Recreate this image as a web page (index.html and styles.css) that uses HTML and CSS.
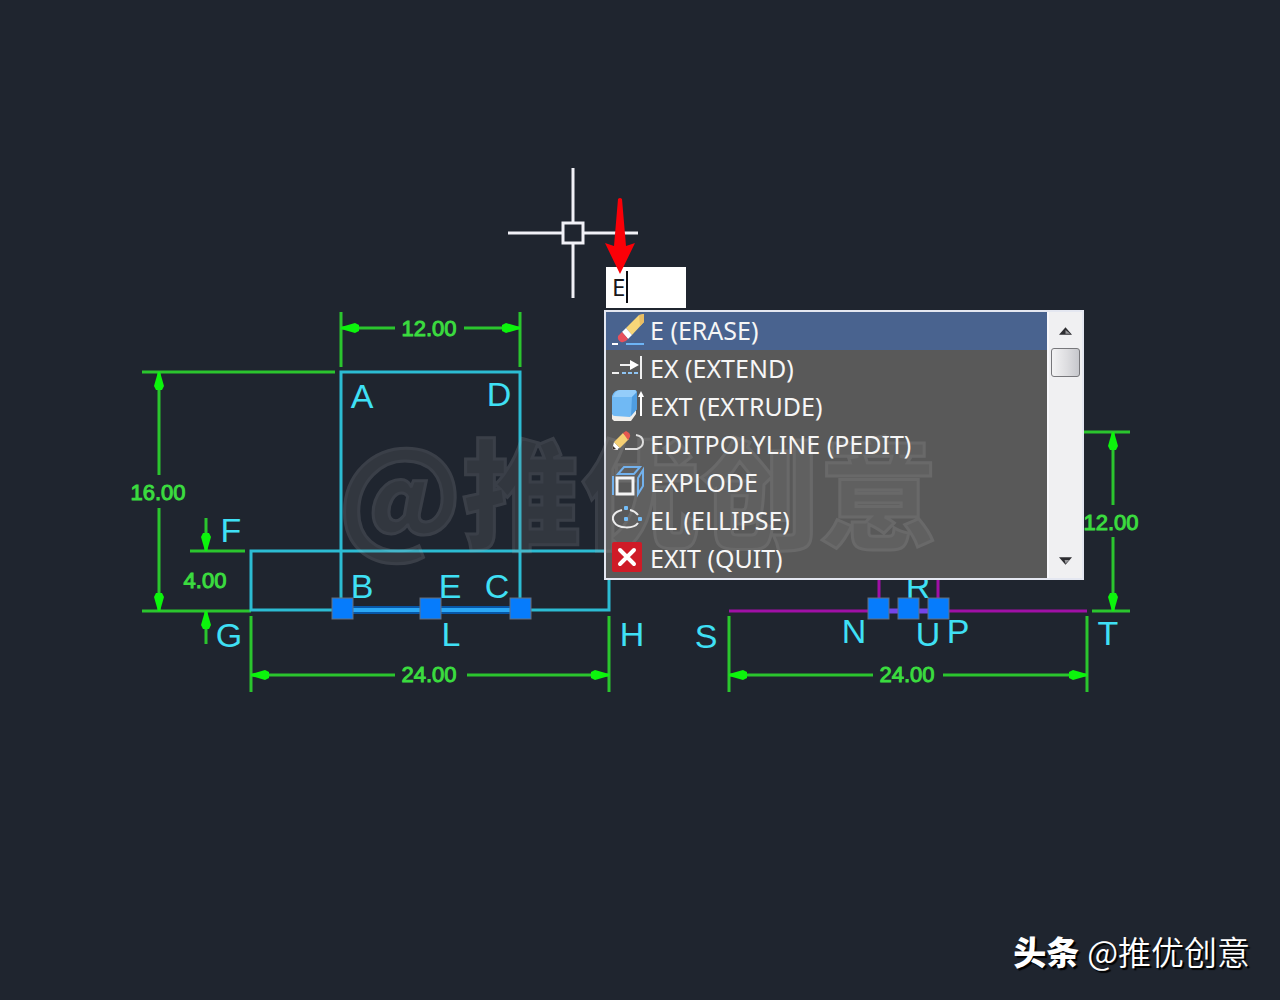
FILE: index.html
```html
<!DOCTYPE html>
<html lang="zh-CN">
<head>
<meta charset="utf-8">
<title>推优创意</title>
<link rel="stylesheet" href="styles.css">
</head>
<body>
<main class="workspace">
  <svg class="drawing" role="img" aria-label="Drawing">
    <defs>
      <path id="head" d="M-1 0 L-5 14 L-3 18 H3 L5 14 L1 0 Z"/>
      <rect id="grip" x="-10" y="-10" width="21" height="21"/>
    </defs>

    <g class="dim-line">
      <path d="M341 312V367M520 312V367M341 328H395M464 328H520"/>
      <path d="M142 372H335M142 611H251M159 372V475M159 508V611"/>
      <path d="M190 551H245M206 518V551M206 611V644"/>
      <path d="M251 616V692M609 616V692M251 675H395M467 675H609"/>
      <path d="M729 616V692M1087 616V692M729 675H873M943 675H1087"/>
      <path d="M1084 432H1130M1092 611H1130M1113 432V505M1113 537V611"/>
    </g>
    <g class="dim-head">
      <use href="#head" transform="translate(341 328) rotate(-90)"/>
      <use href="#head" transform="translate(520 328) rotate(90)"/>
      <use href="#head" transform="translate(159 372)"/>
      <use href="#head" transform="translate(159 611) rotate(180)"/>
      <use href="#head" transform="translate(206 551) rotate(180)"/>
      <use href="#head" transform="translate(206 611)"/>
      <use href="#head" transform="translate(251 675) rotate(-90)"/>
      <use href="#head" transform="translate(609 675) rotate(90)"/>
      <use href="#head" transform="translate(729 675) rotate(-90)"/>
      <use href="#head" transform="translate(1087 675) rotate(90)"/>
      <use href="#head" transform="translate(1113 432)"/>
      <use href="#head" transform="translate(1113 611) rotate(180)"/>
    </g>
    <g class="dim-text">
      <text x="429" y="336">12.00</text>
      <text x="158" y="500">16.00</text>
      <text x="205" y="588">4.00</text>
      <text x="429" y="682">24.00</text>
      <text x="907" y="682">24.00</text>
      <text x="1111" y="530">12.00</text>
    </g>

    <g class="outline">
      <path d="M341 610V372H520V610"/>
      <path d="M251 551H609V610H251Z"/>
    </g>
    <path class="selected-glow" d="M342 610H520"/>
    <path class="selected" d="M342 610H520"/>
    <path class="side" d="M729 611H1087M879 560V611M938 560V611"/>
    <path class="side-selected" d="M879 611H938"/>

    <g class="point">
      <text x="362" y="408">A</text>
      <text x="499" y="406">D</text>
      <text x="231" y="542">F</text>
      <text x="362" y="598">B</text>
      <text x="450" y="598">E</text>
      <text x="497" y="598">C</text>
      <text x="229" y="647">G</text>
      <text x="451" y="646">L</text>
      <text x="632" y="646">H</text>
      <text x="706" y="648">S</text>
      <text x="854" y="643">N</text>
      <text x="918" y="598">R</text>
      <text x="928" y="646">U</text>
      <text x="958" y="643">P</text>
      <text x="1108" y="645">T</text>
    </g>

    <g class="grips">
      <use href="#grip" x="342" y="608"/>
      <use href="#grip" x="430" y="608"/>
      <use href="#grip" x="520" y="608"/>
      <use href="#grip" x="878" y="608"/>
      <use href="#grip" x="908" y="608"/>
      <use href="#grip" x="938" y="608"/>
    </g>

    <path class="cursor" d="M508 233H562M584 233H638M573 168V222M573 244V298M563 223H583V243H563Z"/>
  </svg>

  <section class="prompt">
    <div class="entry">
      <input class="entry-box" type="text" value="E" aria-label="Command">
      <span class="caret"></span>
    </div>
    <div class="menu">
      <div class="options">
        <button class="option option-active" type="button">
          <svg class="icon" viewBox="0 0 32 32"><path d="M0 30H6" stroke="#fff" stroke-width="2"/><path d="M14 30H32" stroke="#6db4f5" stroke-width="2"/><path d="M14 14L27 1L32 0V8L20 21Z" fill="#f7d679"/><path d="M27 1L32 0V8L28 12Z" fill="#e9bd63"/><path d="M10 18L14 14L20 21L16 25Z" fill="#fff"/><path d="M10 18L16 25Q13 29 9 28Q5 26 6 22Z" fill="#e8505c"/></svg>
          <span class="label">E (ERASE)</span></button>
        <button class="option" type="button">
          <svg class="icon" viewBox="0 0 32 32"><path d="M8 13H21M0 21H7M29 4V27" stroke="#f0f0f0" stroke-width="2"/><path d="M18 8L27 13L18 18Z" fill="#fff"/><path d="M10 21H28" stroke="#8fc4f2" stroke-width="2" stroke-dasharray="4 2"/></svg>
          <span class="label">EX (EXTEND)</span></button>
        <button class="option" type="button">
          <svg class="icon" viewBox="0 0 32 32"><path d="M0 24L18 26L24 19V24L19 31H2L0 29Z" fill="#f0eeea"/><path d="M0 6Q2 0 8 0H22Q25 0 25 3V19L18 27L3 26Q0 26 0 23Z" fill="#70b9f4"/><path d="M3 3Q5 0 8 0H22Q25 0 24 3L20 7H1Z" fill="#94cdfa"/><path d="M20 7L25 2V19L19 26Z" fill="#4f9de0"/><path d="M29 6V26" stroke="#fff" stroke-width="2"/><path d="M26 7L29 1L32 7Z" fill="#fff"/></svg>
          <span class="label">EXT (EXTRUDE)</span></button>
        <button class="option" type="button">
          <svg class="icon" viewBox="0 0 32 32"><path d="M13 21H25Q31 19 31 14Q31 8 24 7M0 21H6" stroke="#dedede" stroke-width="2" fill="none"/><path d="M0 22L2 14L8 20Z" fill="#fff"/><path d="M2 14L11 5L17 11L8 20Z" fill="#f5cf73"/><path d="M11 5L14 3Q19 5 18 9L16 12Z" fill="#e65750"/><path d="M0 22L1 18L4 21Z" fill="#392e2c"/></svg>
          <span class="label">EDITPOLYLINE (PEDIT)</span></button>
        <button class="option" type="button">
          <svg class="icon" viewBox="0 0 32 32" fill="none"><path d="M6 8L12 1H28L22 8ZM26 12L31 4V20L26 28ZM1 10V29" stroke="#72b1ed" stroke-width="2"/><rect x="5" y="12" width="16" height="16" stroke="#f4f4f4" stroke-width="3"/></svg>
          <span class="label">EXPLODE</span></button>
        <button class="option" type="button">
          <svg class="icon" viewBox="0 0 32 32" fill="none"><path d="M10 6C2 8 -1 13 2 18C6 25 22 25 26 19M18 6Q23 7 26 11" stroke="#ececec" stroke-width="2"/><path d="M14 2V6M12 4H16M14 13V17M12 15H16M28 13V17M26 15H30" stroke="#74bdf8" stroke-width="3"/></svg>
          <span class="label">EL (ELLIPSE)</span></button>
        <button class="option" type="button">
          <svg class="icon" viewBox="0 0 32 32"><rect x="0" y="0" width="30" height="30" rx="2" fill="#cf1b27"/><path d="M8 8L22 22M22 8L8 22" stroke="#fff" stroke-width="4" stroke-linecap="round"/></svg>
          <span class="label">EXIT (QUIT)</span></button>
      </div>
      <div class="scrollbar">
        <button class="scroll-step" type="button" aria-label="Scroll up"><svg class="step-icon" viewBox="0 0 14 8"><path d="M0 8L7 0L14 8Z" fill="#2d2d31"/><path d="M7 7V3L12 7Z" fill="#99999c"/></svg></button>
        <div class="thumb"></div>
        <button class="scroll-step scroll-down" type="button" aria-label="Scroll down"><svg class="step-icon" viewBox="0 0 14 8"><path d="M0 0H14L7 8Z" fill="#2d2d31"/><path d="M6 3H11L7 7Z" fill="#99999c"/></svg></button>
      </div>
    </div>
    <svg class="pointer" viewBox="0 0 30 78"><path d="M13 2Q15 0 17 2L21 49L30 46L15 77L0 46L9 49Z" fill="#fb0007"/></svg>
  </section>

  <div class="watermark">@推优创意</div>
  <footer class="credit"><strong class="brand">头条</strong><span>@推优创意</span></footer>
</main>
</body>
</html>
```
FILE: styles.css
```css
* { box-sizing: border-box; }

body {
  margin: 0;
  background: #1f252f;
  font-family: "Noto Sans", "Noto Sans CJK SC", sans-serif;
}

.workspace {
  position: relative;
  min-height: 100vh;
  overflow: hidden;
}

/* Drawing canvas */
.drawing {
  display: block;
  width: 100%;
  height: 100vh;
  min-height: 720px;
  fill: none;
}

.dim-line { stroke: #2bc52e; stroke-width: 3; }
.dim-head { fill: #0cf40c; }
.dim-text {
  fill: #3bdc3f;
  stroke: #3bdc3f;
  stroke-width: 1;
  font: 22px "Liberation Sans", sans-serif;
  text-anchor: middle;
}
.outline { stroke: #2cbcd3; stroke-width: 3; }
.selected-glow { stroke: #0757a8; stroke-width: 8; }
.selected { stroke: #2ba8f6; stroke-width: 4; }
.side { stroke: #a010a6; stroke-width: 3; }
.side-selected { stroke: #7445e8; stroke-width: 5; }
.point {
  fill: #3fe0f5;
  font: 34px "Liberation Sans", sans-serif;
  text-anchor: middle;
}
.grips { fill: #067cfc; stroke: #66717f; stroke-width: 1; }
.cursor { stroke: #f1f1f7; stroke-width: 3; }

/* Command prompt floating at the cursor */
.prompt {
  position: absolute;
  left: 604px;
  top: 267px;
  width: 480px;
}

.entry {
  position: relative;
  width: 82px;
  height: 43px;
  padding: 0 0 2px 2px;
}
.entry-box {
  display: block;
  width: 100%;
  height: 41px;
  padding: 0 6px 2px;
  border: 0;
  background: #fff;
  color: #18181c;
  font: 24px "Noto Sans", sans-serif;
}
.caret {
  position: absolute;
  left: 22px;
  top: 4px;
  width: 2px;
  height: 32px;
  background: #0c0d12;
}

.menu {
  display: flex;
  border: 2px solid #e4e7f1;
  background: #595959;
}
.options { flex: 1; }
.option {
  display: flex;
  align-items: center;
  gap: 6px;
  width: 100%;
  height: 38px;
  padding: 0 6px 2px;
  border: 0;
  background: #595959;
  color: #f6f6f6;
  font: 25px "Noto Sans", sans-serif;
  white-space: nowrap;
}
.option-active { background: #49638f; }
.icon { width: 32px; height: 32px; }

/* Icons and labels stay above the watermark, their rows below it */
.icon,
.label {
  position: relative;
  z-index: 2;
}

.scrollbar {
  display: flex;
  flex-direction: column;
  align-items: center;
  width: 35px;
  border-left: 2px solid #f8f8fc;
  background: #f0f0f2;
}
.scroll-step {
  width: 100%;
  height: 36px;
  padding: 0;
  border: 0;
  background: none;
}
.scroll-down { margin-top: auto; }
.step-icon { width: 13px; height: 8px; }
.thumb {
  width: 29px;
  height: 29px;
  border: 1px solid #77777b;
  border-radius: 3px;
  background: linear-gradient(90deg, #f3f3f4, #dddde0 55%, #c6c7cc);
}

.pointer {
  position: absolute;
  left: 1px;
  top: -70px;
  width: 30px;
  height: 78px;
}

/* Marks laid over the drawing */
.watermark {
  position: absolute;
  z-index: 1;
  left: 338px;
  top: 401px;
  color: #808080;
  opacity: 0.2;
  font: 900 119px/174px "Noto Sans CJK SC", sans-serif;
  white-space: nowrap;
  pointer-events: none;
  -webkit-text-stroke: 3px #a8a8ac;
}

.credit {
  position: absolute;
  right: 30px;
  bottom: 25px;
  display: flex;
  gap: 8px;
  color: #fff;
  font: 350 33px/48px "Noto Sans CJK SC", sans-serif;
  text-shadow: 2px 2px 1px #000;
}
.brand { font-weight: 900; }
```
